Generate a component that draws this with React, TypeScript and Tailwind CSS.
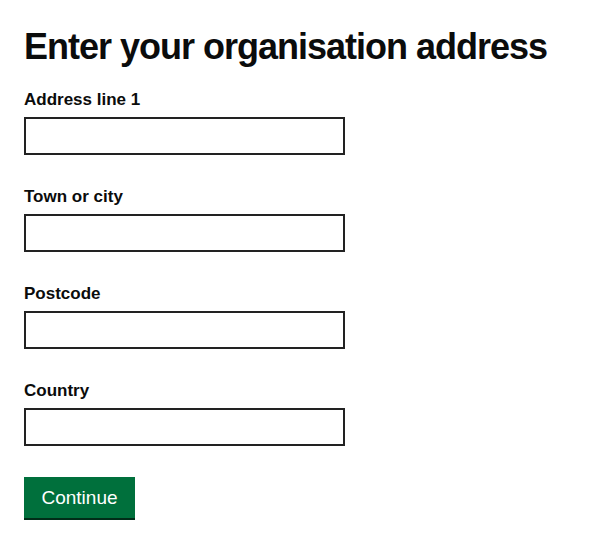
import React from 'react';

const fields = ['Address line 1', 'Town or city', 'Postcode', 'Country'];

export default function App() {
  return (
    <div className="min-h-screen bg-white pl-[24px] pt-[27px] text-[#0b0c0c] font-['Liberation_Sans',Arial,sans-serif]">
      {/* Heading */}
      <h1 className="text-[36px] leading-[40px] font-bold tracking-[-1px] mb-[21px]">
        Enter your organisation address
      </h1>

      {/* Address fields */}
      {fields.map((label, i) => (
        <div key={label} className="mb-[30px]">
          <label htmlFor={`field-${i}`} className="block text-[17px] leading-[24px] font-bold mb-[5px]">
            {label}
          </label>
          <input
            id={`field-${i}`}
            type="text"
            className="block w-[321px] h-[38px] border-2 border-[#222222] bg-white px-2 outline-none"
          />
        </div>
      ))}

      {/* Submit */}
      <button className="mt-[1px] h-[41px] w-[111px] bg-[#00703c] text-white text-[19px] leading-none shadow-[0_2px_0_#002d18]">
        Continue
      </button>
    </div>
  );
}
